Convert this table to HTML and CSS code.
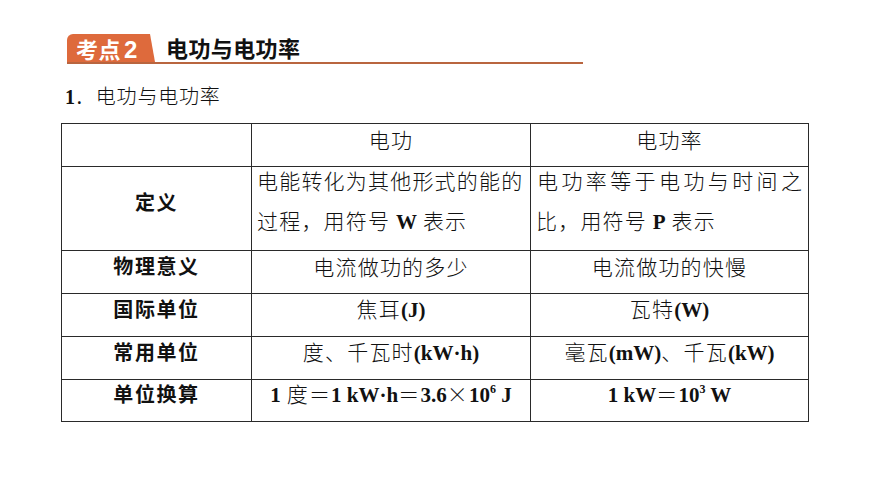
FILE: index.html
```html
<!DOCTYPE html>
<html lang="zh-CN">
<head>
<meta charset="utf-8">
<link rel="stylesheet" href="styles.css">
</head>
<body>
<div class="page">
  <div class="topic">
    <div class="tab">考点<span class="num">2</span></div>
    <div class="topic-title">电功与电功率</div>
  </div>
  <div class="heading"><span class="lat">1</span>．电功与电功率</div>
  <div class="table">
    <div class="cell"></div>
    <div class="cell c"><span>电功</span></div>
    <div class="cell c"><span>电功率</span></div>

    <div class="cell h"><span>定义</span></div>
    <div class="cell l two"><div>电能转化为其他形式的能的<br>过程，用符号 <b class="lat">W</b> 表示</div></div>
    <div class="cell l two"><div><span class="just">电功率等于电功与时间之</span>比，用符号 <b class="lat">P</b> 表示</div></div>

    <div class="cell h"><span>物理意义</span></div>
    <div class="cell c"><span>电流做功的多少</span></div>
    <div class="cell c"><span>电流做功的快慢</span></div>

    <div class="cell h"><span>国际单位</span></div>
    <div class="cell c"><span>焦耳<b class="lat">(J)</b></span></div>
    <div class="cell c"><span>瓦特<b class="lat">(W)</b></span></div>

    <div class="cell h"><span>常用单位</span></div>
    <div class="cell c"><span>度、千瓦时<b class="lat">(kW·h)</b></span></div>
    <div class="cell c"><span>毫瓦<b class="lat">(mW)</b>、千瓦<b class="lat">(kW)</b></span></div>

    <div class="cell h"><span>单位换算</span></div>
    <div class="cell c"><span><b class="lat">1</b> 度<b class="eq">＝</b><b class="lat">1 kW·h</b><b class="eq">＝</b><b class="lat">3.6</b>×<b class="lat">10<sup>6</sup> J</b></span></div>
    <div class="cell c"><span><b class="lat">1 kW</b><b class="eq">＝</b><b class="lat">10<sup>3</sup> W</b></span></div>
  </div>
</div>
</body>
</html>
```
FILE: styles.css
```css
html, body {
  margin: 0;
  padding: 0;
  background: #ffffff;
}
body {
  font-family: "Liberation Serif", "Noto Sans CJK SC", serif;
  color: #111;
}
.page {
  padding: 34px 0 0 61px;
}
.topic {
  display: flex;
  align-items: flex-end;
  width: 516px;
  height: 28px;
  margin-left: 6px;
  border-bottom: 2px solid #b9653f;
}
.tab {
  height: 28px;
  width: 88px;
  box-sizing: border-box;
  padding-left: 9px;
  background: #de6a3c;
  color: #fff;
  font-family: "Noto Sans CJK SC", sans-serif;
  font-weight: 700;
  font-size: 22px;
  line-height: 28px;
  letter-spacing: 0.5px;
  border-top-left-radius: 6px;
  clip-path: polygon(0 0, 83px 0, 88px 100%, 0 100%);
}
.tab .num {
  font-family: "Liberation Sans", "Noto Sans CJK SC", sans-serif;
  font-weight: 700;
  font-size: 24px;
  margin-left: 3px;
}
.topic-title {
  margin-left: 11px;
  font-family: "Noto Sans CJK SC", sans-serif;
  font-weight: 700;
  font-size: 22px;
  line-height: 30px;
  letter-spacing: 0.4px;
  color: #111;
}
.heading {
  margin-top: 17px;
  margin-left: 4px;
  height: 30px;
  line-height: 30px;
  font-family: "Noto Sans CJK SC", sans-serif;
  font-weight: 300;
  font-size: 20px;
  letter-spacing: 0.8px;
}
.heading .lat {
  font-family: "Liberation Serif", serif;
  font-weight: 700;
  font-size: 20px;
}
.lat {
  font-family: "Liberation Serif", serif;
  font-weight: 700;
  letter-spacing: 0;
}
.eq {
  font-family: "Noto Sans CJK SC", sans-serif;
  font-weight: 300;
}
.table {
  margin-top: 12px;
  display: grid;
  grid-template-columns: 190px 279px 278px;
  grid-template-rows: 43px 84px 43px 43px 43px 42px;
  border-top: 1px solid #2a2a2a;
  border-left: 1px solid #2a2a2a;
  width: max-content;
}
.cell {
  box-sizing: border-box;
  border-right: 1px solid #2a2a2a;
  border-bottom: 1px solid #2a2a2a;
  display: flex;
  align-items: center;
  padding-bottom: 13px;
  font-family: "Noto Sans CJK SC", sans-serif;
  font-weight: 300;
  font-size: 21px;
  line-height: 30px;
  letter-spacing: 1.2px;
  color: #111;
}
.cell.c {
  justify-content: center;
}
.cell.h {
  justify-content: center;
  font-weight: 700;
  font-size: 20px;
  letter-spacing: 1.6px;
}
.cell.l {
  padding-left: 5px;
  padding-right: 4px;
}
.cell.two {
  line-height: 40px;
  padding-top: 2px;
  padding-bottom: 17px;
}
.cell.two > div {
  width: 100%;
}
.just {
  display: block;
  text-align: justify;
  text-align-last: justify;
  letter-spacing: 0;
  padding-left: 1px;
  padding-right: 2px;
}
.cell sup {
  font-size: 12px;
  line-height: 0;
  vertical-align: 9px;
}
```
